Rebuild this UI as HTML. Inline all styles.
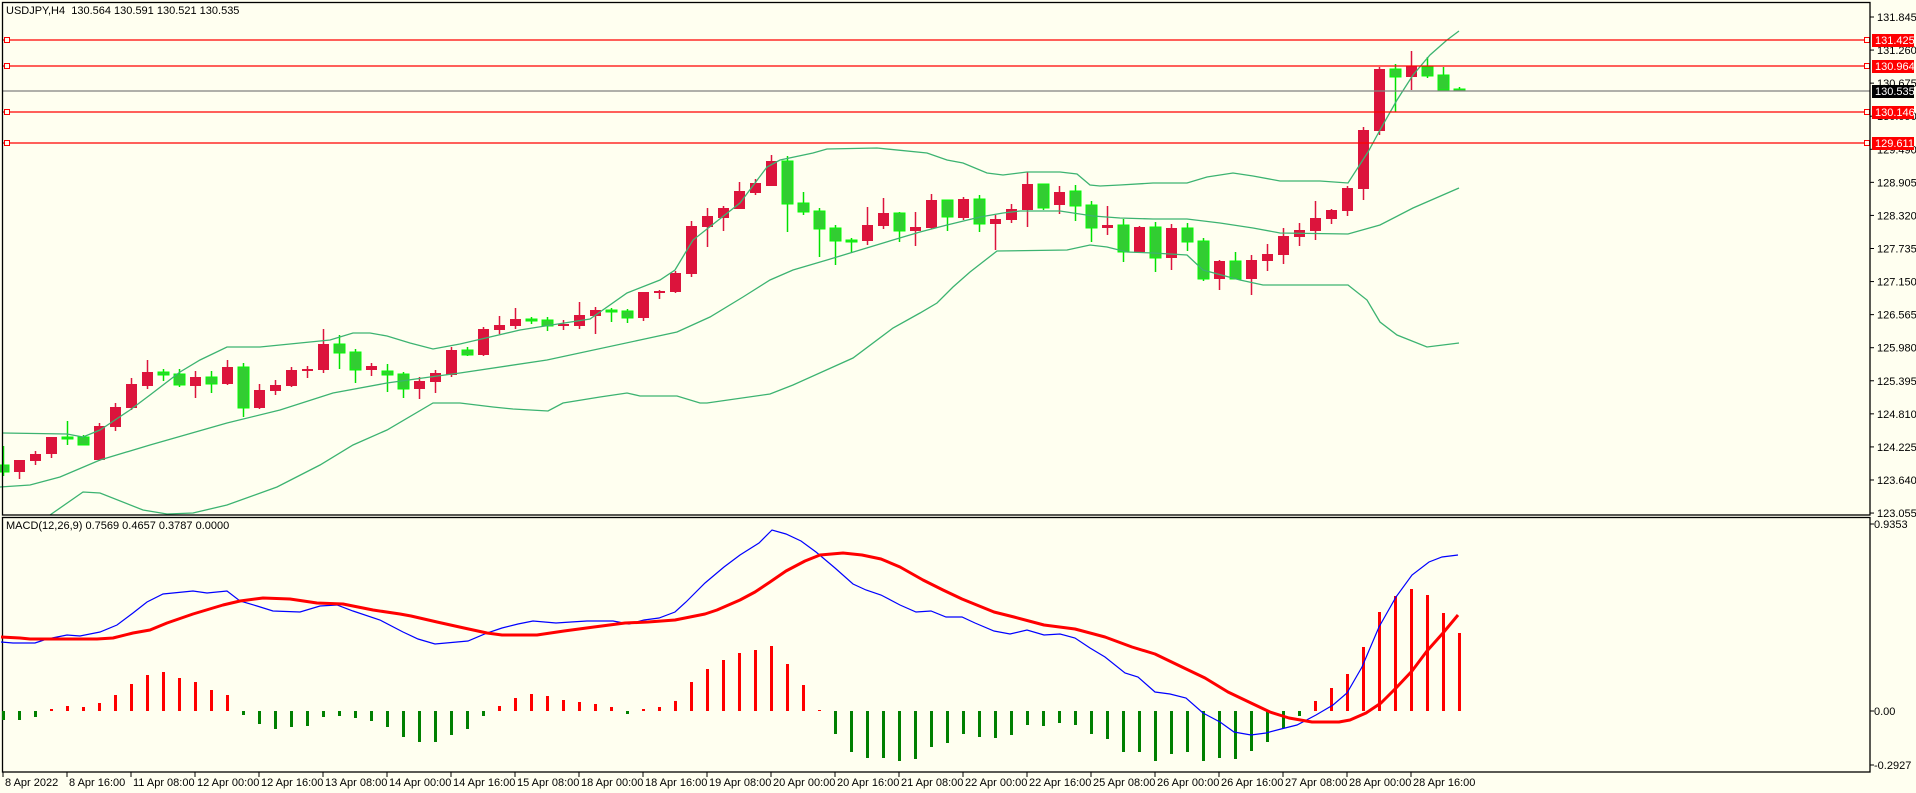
<!DOCTYPE html>
<html><head><meta charset="utf-8"><style>
html,body{margin:0;padding:0;background:#FFFFF0;width:1916px;height:793px;overflow:hidden}
svg{display:block}
text{font-family:"Liberation Sans",sans-serif;font-size:11px;fill:#000}
</style></head><body>
<svg id="s" width="1916" height="793" xmlns="http://www.w3.org/2000/svg">
<rect width="1916" height="793" fill="#FFFFF0"/>
<g id="cand"></g>
<!-- Bollinger -->
<g fill="none" stroke="#3CB371" stroke-width="1.3">
<polyline points="3,433 67,434 83,437 100,430 115,420 130,410 150,395 180,372 200,360 227,347 260,347 300,343 330,340 353,333 370,333 387,336 410,343 433,349 460,344 490,337 520,330 545,326 590,319 627,293 660,280 675,270 693,240 740,203 767,167 780,160 813,153 827,149 877,148 927,153 947,160 963,163 987,173 1003,175 1027,172 1060,172 1077,174 1090,185 1100,186 1120,185 1153,183 1187,183 1207,177 1233,173 1253,176 1280,181 1320,181 1348,183 1368,152 1380,130 1397,100 1413,75 1430,55 1447,40 1459,31"/>
<polyline points="0,487 30,485 60,477 100,460 150,445 227,423 280,410 333,393 387,383 430,377 460,373 547,360 640,340 677,332 710,317 743,297 770,280 793,270 827,260 860,250 893,240 920,232 947,225 980,217 1003,213 1020,211 1060,211 1093,216 1120,218 1153,219 1187,219 1220,223 1253,228 1280,233 1348,234 1380,225 1413,208 1459,188"/>
<polyline points="50,515 83,492 100,493 143,510 167,514 193,513 227,505 277,487 320,465 353,445 387,430 433,403 460,403 493,407 513,409 548,411 563,403 600,397 627,393 640,396 677,396 700,403 707,403 770,394 793,385 853,358 893,328 920,313 937,303 953,287 970,272 997,251 1067,250 1090,245 1107,247 1127,252 1153,253 1187,255 1203,270 1240,280 1263,285 1348,285 1367,300 1380,322 1397,335 1427,347 1459,343"/>
</g>
<!-- horizontal lines -->
<g stroke-width="1.3">
<line x1="2" y1="40" x2="1870" y2="40" stroke="#FF0000"/>
<line x1="2" y1="66" x2="1870" y2="66" stroke="#FF0000"/>
<line x1="2" y1="91" x2="1870" y2="91" stroke="#808080"/>
<line x1="2" y1="112" x2="1870" y2="112" stroke="#FF0000"/>
<line x1="2" y1="143" x2="1870" y2="143" stroke="#FF0000"/>
</g>
<g fill="#FFFFF0" stroke="#FF0000" stroke-width="1">
<rect x="4.5" y="37.5" width="5" height="5"/><rect x="4.5" y="63.5" width="5" height="5"/><rect x="4.5" y="109.5" width="5" height="5"/><rect x="4.5" y="140.5" width="5" height="5"/>
<rect x="1864.5" y="37.5" width="5" height="5"/><rect x="1864.5" y="63.5" width="5" height="5"/><rect x="1864.5" y="109.5" width="5" height="5"/><rect x="1864.5" y="140.5" width="5" height="5"/>
</g>
<!-- borders -->
<g fill="none" stroke="#000" stroke-width="1.3">
<rect x="2.5" y="2.5" width="1867.5" height="512.5"/>
<rect x="2.5" y="517.5" width="1867.5" height="254.5"/>
</g>
<g id="axis"></g>
<!-- MACD -->
<g id="hist"></g>
<polyline fill="none" stroke="#0000FF" stroke-width="1.2" points="1,642 13,643 35,643 47,639 67,635 80,636 100,632 117,625 133,613 147,602 163,594 193,591 207,593 227,591 240,601 257,606 273,611 300,612 320,606 337,605 353,611 380,620 403,632 418,639 435,644 457,642 468,641 487,633 502,628 518,624 533,621 556,623 571,622 587,621 613,621 629,624 644,620 659,618 675,612 686,602 705,583 724,567 740,555 759,543 772,530 786,534 801,541 816,552 835,568 853,584 866,590 881,595 900,605 916,612 931,611 946,617 962,617 975,623 994,631 1010,634 1027,630 1044,635 1060,634 1075,638 1090,648 1105,657 1125,673 1138,677 1155,692 1170,694 1186,698 1203,713 1220,722 1234,732 1251,735 1266,733 1281,729 1297,725 1316,715 1333,705 1347,693 1362,667 1379,627 1396,597 1412,575 1429,562 1442,557 1458,555"/>
<polyline fill="none" stroke="#FF0000" stroke-width="3" stroke-linejoin="round" points="1,637 20,638 30,639 97,639 113,638 133,633 150,630 167,623 193,614 223,605 240,601 263,598 290,599 317,603 343,604 373,610 400,614 411,616 437,622 464,628 487,633 502,635 537,635 564,631 594,627 625,623 648,622 675,620 705,614 717,610 740,600 755,592 770,582 786,571 805,561 820,555 843,553 862,555 881,559 900,567 923,580 943,590 962,599 994,612 1014,617 1044,625 1075,629 1105,637 1132,647 1155,654 1182,667 1205,678 1228,692 1251,703 1270,712 1289,718 1312,722 1339,722 1350,720 1366,713 1381,703 1396,688 1412,671 1427,651 1443,633 1458,615"/>
<text x="6" y="14">USDJPY,H4&#160; 130.564 130.591 130.521 130.535</text>
<text x="6" y="529">MACD(12,26,9) 0.7569 0.4657 0.3787 0.0000</text>
</svg>
<script>
var NS="http://www.w3.org/2000/svg";
function el(p,t,a,txt){var e=document.createElementNS(NS,t);for(var k in a)e.setAttribute(k,a[k]);if(txt!=null)e.textContent=txt;p.appendChild(e);return e;}
var C=[[446,465,472,476,'G'],[460,460,472,479,'R'],[451,454,461,465,'R'],[437,437,454,458,'R'],[421,437,438,445,'G'],[435,437,445,445,'G'],[423,426,460,461,'R'],[403,407,427,431,'R'],[378,384,408,410,'R'],[360,372,386,389,'R'],[369,372,375,381,'G'],[369,374,385,387,'G'],[371,377,386,398,'R'],[371,377,384,393,'G'],[360,367,384,385,'R'],[363,367,408,417,'G'],[384,390,408,409,'R'],[380,385,391,395,'R'],[367,370,386,387,'R'],[366,369,371,378,'R'],[329,344,370,373,'R'],[335,344,353,369,'G'],[349,352,370,383,'G'],[363,366,370,376,'R'],[364,371,375,392,'G'],[372,374,389,398,'G'],[377,381,389,399,'R'],[370,373,382,393,'R'],[347,350,375,377,'R'],[347,350,355,356,'G'],
[327,329,355,356,'R'],[316,325,330,334,'R'],[308,319,326,329,'R'],[317,319,321,324,'G'],[317,320,326,331,'G'],[320,324,326,330,'R'],[302,315,326,329,'R'],[307,310,316,334,'R'],[308,310,312,322,'G'],[309,311,318,323,'G'],[292,292,318,321,'R'],[290,291,293,299,'R'],[271,273,292,293,'R'],[221,226,274,277,'R'],[208,216,227,247,'R'],[206,208,218,231,'R'],[182,191,209,209,'R'],[179,183,193,195,'R'],[155,161,186,186,'R'],[156,161,204,232,'G'],[192,203,212,215,'G'],[208,211,229,257,'G'],[225,228,241,265,'G'],[238,240,242,253,'G'],[207,225,241,245,'R'],[198,213,226,229,'R'],[212,213,231,242,'G'],[212,227,231,246,'R'],[194,200,228,229,'R'],
[200,200,217,231,'G'],[197,199,218,220,'R'],[195,199,224,232,'G'],[215,219,224,250,'R'],[204,209,220,223,'R'],[172,184,210,227,'R'],[184,184,208,210,'G'],[186,192,205,214,'R'],[185,191,206,221,'G'],[201,205,228,242,'G'],[206,225,228,235,'R'],[219,225,252,262,'G'],[226,227,252,252,'R'],[222,227,258,272,'G'],[224,228,258,270,'R'],[223,228,242,251,'G'],[238,241,279,281,'G'],[260,261,279,290,'R'],[252,261,279,279,'G'],[255,260,279,295,'R'],[244,254,261,271,'R'],[228,236,255,264,'R'],[223,230,237,246,'R'],[201,218,231,240,'R'],[209,210,219,224,'R'],[186,188,211,216,'R'],[127,130,189,200,'R'],[67,69,131,135,'R'],[64,69,77,112,'G'],[51,66,77,90,'R'],[57,67,76,78,'G'],[67,75,90,91,'G'],[87,89,91,91,'G']];
var g=document.getElementById('cand');
C.forEach(function(c,i){var x=3+16*i;var red=c[4]=='R';var col=red?'#DC143C':'#32CD32';var ln=red?'#DC143C':'#00E000';
el(g,'line',{x1:x+0.5,y1:c[0],x2:x+0.5,y2:c[3],stroke:ln,'stroke-width':1.5});
var h=Math.max(c[2]-c[1],2);
el(g,'rect',{x:x-5,y:c[1],width:11,height:h,fill:col,stroke:red?'none':'#00FF00','stroke-width':red?0:1});});
var H=[720,720,717,709,706,707,703,695,684,675,672,678,682,690,695,715,724,729,727,726,717,716,718,721,727,737,742,742,735,729,716,706,698,694,696,700,702,704,707,714,709,707,701,682,669,660,653,650,646,664,685,710,734,752,758,758,761,759,747,743,734,737,738,735,725,726,723,725,734,739,752,752,761,754,752,761,758,759,751,742,728,716,701,688,674,647,612,596,589,595,613,633];
var hg=document.getElementById('hist');
H.forEach(function(y,i){var x=3+16*i;var pos=y<711;el(hg,'rect',{x:x-1,y:Math.min(y,711),width:3,height:Math.max(Math.abs(711-y),1),fill:pos?'#FF0000':'#008000'});});
var ax=document.getElementById('axis');
var P=['131.845','131.260','130.675','130.090','129.490','128.905','128.320','127.735','127.150','126.565','125.980','125.395','124.810','124.225','123.640','123.055'];
P.forEach(function(p,k){var y=17+k*33.07;el(ax,'line',{x1:1870,y1:y,x2:1874,y2:y,stroke:'#000'});el(ax,'text',{x:1877,y:y+4},p);});
var L=[[40,'131.425','#FF0000'],[66,'130.964','#FF0000'],[91,'130.535','#000'],[112,'130.146','#FF0000'],[143,'129.611','#FF0000']];
L.forEach(function(l){el(ax,'rect',{x:1872,y:l[0]-6,width:42,height:13,fill:l[2]});el(ax,'text',{x:1875,y:l[0]+4,style:'fill:#fff'},l[1]);});
[[524,'0.9353'],[711,'0.00'],[765,'-0.2927']].forEach(function(m){el(ax,'line',{x1:1870,y1:m[0],x2:1874,y2:m[0],stroke:'#000'});el(ax,'text',{x:1874,y:m[0]+4},m[1]);});
var T=["8 Apr 2022","8 Apr 16:00","11 Apr 08:00","12 Apr 00:00","12 Apr 16:00","13 Apr 08:00","14 Apr 00:00","14 Apr 16:00","15 Apr 08:00","18 Apr 00:00","18 Apr 16:00","19 Apr 08:00","20 Apr 00:00","20 Apr 16:00","21 Apr 08:00","22 Apr 00:00","22 Apr 16:00","25 Apr 08:00","26 Apr 00:00","26 Apr 16:00","27 Apr 08:00","28 Apr 00:00","28 Apr 16:00"];
T.forEach(function(t,k){var x=3+64*k;el(ax,'line',{x1:x,y1:772,x2:x,y2:777,stroke:'#000'});el(ax,'text',{x:x+2,y:786},t);});
</script>
</body></html>
